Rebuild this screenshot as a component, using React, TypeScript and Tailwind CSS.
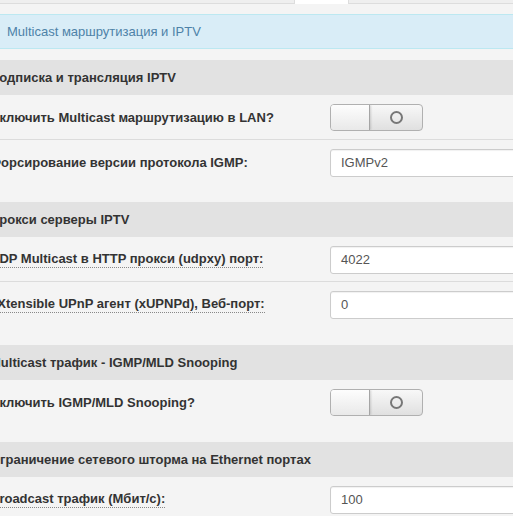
import React from "react";

type Row =
  | { kind: "toggle"; label: string; hint?: boolean }
  | { kind: "input"; label: string; value: string; hint?: boolean };

type Section = { title: string; rows: Row[]; tail: string };

// Same order as the router's IPTV page. `tail` is the height of the last row.
const SECTIONS: Section[] = [
  {
    title: "Подписка и трансляция IPTV",
    tail: "h-[62px]",
    rows: [
      { kind: "toggle", label: "Включить Multicast маршрутизацию в LAN?" },
      { kind: "input", label: "Форсирование версии протокола IGMP:", value: "IGMPv2" },
    ],
  },
  {
    title: "Прокси серверы IPTV",
    tail: "h-[63px]",
    rows: [
      { kind: "input", label: "UDP Multicast в HTTP прокси (udpxy) порт:", value: "4022", hint: true },
      { kind: "input", label: "eXtensible UPnP агент (xUPNPd), Веб-порт:", value: "0", hint: true },
    ],
  },
  {
    title: "Multicast трафик - IGMP/MLD Snooping",
    tail: "h-[62px]",
    rows: [{ kind: "toggle", label: "Включить IGMP/MLD Snooping?" }],
  },
  {
    title: "Ограничение сетевого шторма на Ethernet портах",
    tail: "h-[62px]",
    rows: [{ kind: "input", label: "Broadcast трафик (Мбит/с):", value: "100", hint: true }],
  },
];

function Toggle() {
  return (
    <div className="flex h-[27px] w-[93px] overflow-hidden rounded-[4px] border border-[#b0b0b0] bg-gradient-to-b from-[#f8f8f8] to-[#e0e0e0]">
      <div className="w-[39px] border-r border-[#a5a5a5] bg-gradient-to-b from-[#fdfdfd] to-[#e9e9e9] shadow-[1px_0_2px_rgba(0,0,0,0.15)]" />
      <div className="flex flex-1 items-center justify-center">
        <span className="h-[13px] w-[13px] rounded-full border-2 border-[#777]" />
      </div>
    </div>
  );
}

function FieldRow({ row, tail }: { row: Row; tail?: string }) {
  return (
    <div
      className={
        tail
          ? `grid ${tail} grid-cols-[340px_1fr] items-start pt-[9px]`
          : "grid h-[45px] grid-cols-[340px_1fr] items-start border-b border-[#dcdcdc] pt-[9px]"
      }
    >
      <div className="flex h-[27px] items-center">
        <span
          className={
            row.hint
              ? "border-b border-dotted border-[#888] leading-[16px] font-bold text-[#333]"
              : "leading-[16px] font-bold text-[#333]"
          }
        >
          {row.label}
        </span>
      </div>
      {row.kind === "toggle" ? (
        <Toggle />
      ) : (
        <div className="flex h-[28px] items-center rounded-[3px] border border-[#cccccc] bg-white pl-[10px] text-[13px] text-[#555] shadow-[inset_0_1px_1px_rgba(0,0,0,0.06)]">
          {row.value}
        </div>
      )}
    </div>
  );
}

export default function App() {
  return (
    <div
      className="h-[516px] w-[513px] overflow-hidden bg-[#f4f4f4] text-[13px]"
      style={{ fontFamily: '"Liberation Sans", Arial, sans-serif' }}
    >
      {/* tab strip */}
      <div className="flex h-[4px] border-b border-[#dddddd] bg-[#efefef]">
        <div className="ml-[294px] -mb-px h-[4px] w-[55px] border-x border-[#dddddd] bg-white" />
      </div>

      <div className="mt-[10px] flex h-[35px] items-center border-y border-[#bce8f1] bg-[#d9edf7] pl-[7px] text-[13px] text-[#4d82a8]">
        Multicast маршрутизация и IPTV
      </div>

      <div className="-ml-[10px] mt-[11px] w-[560px]">
        {SECTIONS.map((s) => (
          <div key={s.title}>
            <div className="flex h-[35px] items-center bg-[#e2e2e2] font-bold text-[#333]">{s.title}</div>
            {s.rows.map((r, i) => (
              <FieldRow key={r.label} row={r} tail={i === s.rows.length - 1 ? s.tail : undefined} />
            ))}
          </div>
        ))}
      </div>
    </div>
  );
}
